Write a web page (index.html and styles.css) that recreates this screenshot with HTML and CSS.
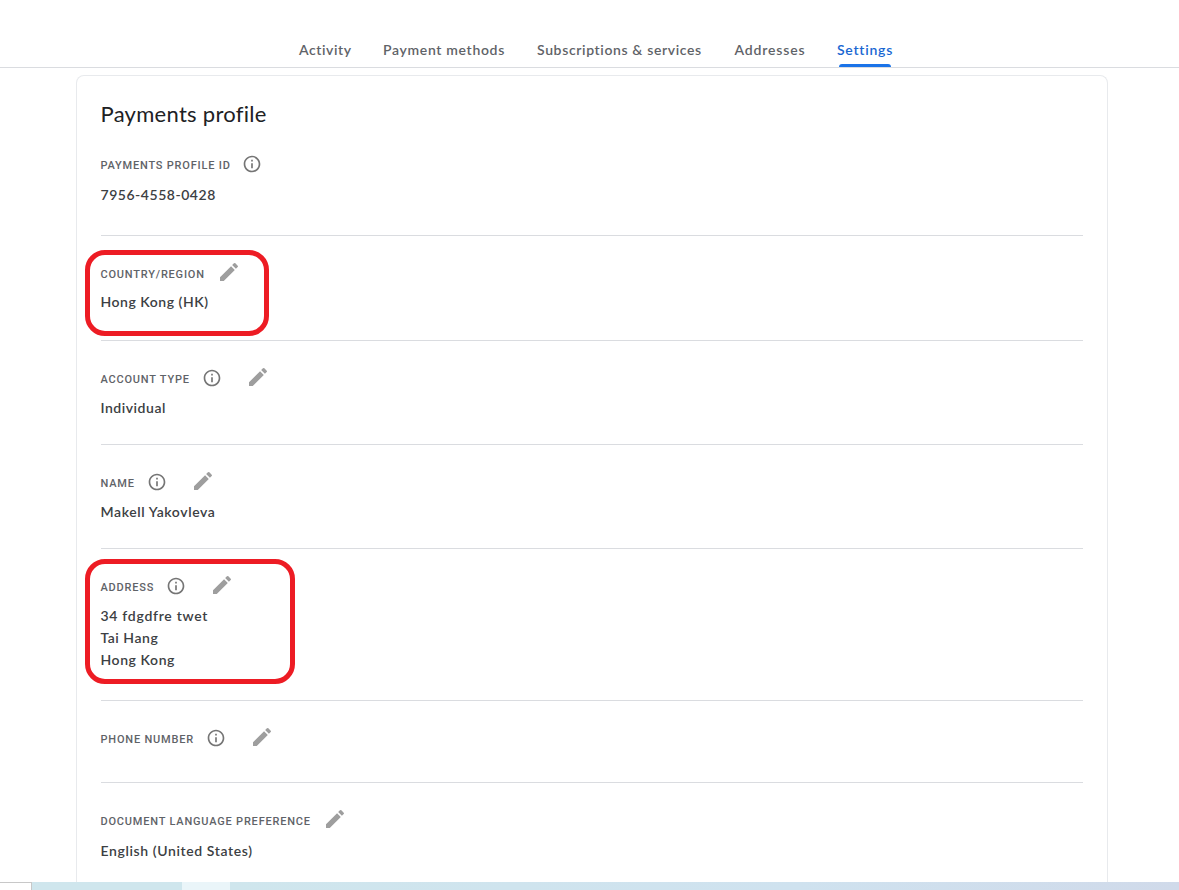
FILE: index.html
```html
<!DOCTYPE html>
<html lang="en">
<head>
<meta charset="utf-8">
<title>Settings</title>
<link rel="stylesheet" href="styles.css">
</head>
<body>
<svg class="defs" aria-hidden="true">
  <symbol id="info" viewBox="0 0 24 24"><path d="M11 7h2v2h-2zm0 4h2v6h-2zm1-9C6.48 2 2 6.48 2 12s4.48 10 10 10 10-4.48 10-10S17.52 2 12 2zm0 18c-4.41 0-8-3.59-8-8s3.59-8 8-8 8 3.59 8 8-3.59 8-8 8z"/></symbol>
  <symbol id="edit" viewBox="0 0 24 24"><path d="M3 17.25V21h3.75L17.81 9.94l-3.75-3.75L3 17.25zM20.71 7.04a1 1 0 0 0 0-1.41l-2.34-2.34a1 1 0 0 0-1.41 0l-1.83 1.83 3.75 3.75 1.83-1.83z"/></symbol>
</svg>
<div class="page">
  <nav class="tabs">
    <a class="tab t-activity">Activity</a>
    <a class="tab t-methods">Payment methods</a>
    <a class="tab t-subs">Subscriptions &amp; services</a>
    <a class="tab t-addr">Addresses</a>
    <a class="tab t-settings active">Settings</a>
  </nav>
  <main class="card">
    <h1 class="title"><span>Payments profile</span></h1>
    <section class="row first">
      <div class="head"><span class="label">PAYMENTS PROFILE ID</span><svg class="info"><use href="#info"/></svg></div>
      <div class="value v-id">7956-4558-0428</div>
    </section>
    <section class="row country">
      <div class="head"><span class="label">COUNTRY/REGION</span><svg class="edit"><use href="#edit"/></svg></div>
      <div class="value v-hk">Hong Kong (HK)</div>
      <div class="mark mark-country"></div>
    </section>
    <section class="row">
      <div class="head"><span class="label">ACCOUNT TYPE</span><svg class="info"><use href="#info"/></svg><svg class="edit"><use href="#edit"/></svg></div>
      <div class="value v-ind">Individual</div>
    </section>
    <section class="row">
      <div class="head"><span class="label">NAME</span><svg class="info"><use href="#info"/></svg><svg class="edit"><use href="#edit"/></svg></div>
      <div class="value v-name">Makell Yakovleva</div>
    </section>
    <section class="row address">
      <div class="head"><span class="label">ADDRESS</span><svg class="info"><use href="#info"/></svg><svg class="edit"><use href="#edit"/></svg></div>
      <div class="value v-street">34 fdgdfre twet</div>
      <div class="value v-tai">Tai Hang</div>
      <div class="value v-city">Hong Kong</div>
      <div class="mark mark-address"></div>
    </section>
    <section class="row phone">
      <div class="head"><span class="label">PHONE NUMBER</span><svg class="info"><use href="#info"/></svg><svg class="edit"><use href="#edit"/></svg></div>
    </section>
    <section class="row language">
      <div class="head"><span class="label">DOCUMENT LANGUAGE PREFERENCE</span><svg class="edit"><use href="#edit"/></svg></div>
      <div class="value v-lang">English (United States)</div>
    </section>
  </main>
  <footer class="strip"><div class="corner"></div><div class="band"></div><div class="band light"></div><div class="band fade"></div></footer>
</div>
</body>
</html>
```
FILE: styles.css
```css
* { box-sizing: border-box; }
body { margin: 0; background: #fff; font-family: "Lato", "Open Sans", sans-serif; }
.defs { display: none; }
.page { width: 1179px; height: 890px; overflow: hidden; display: flex; flex-direction: column; }
.tabs { flex: none; height: 68px; border-bottom: 1px solid #dadce0; padding: 32px 0 0 299px; display: flex; gap: 32px; }
.tab { height: 35px; line-height: 36px; font-size: 14px; font-weight: 600; color: #5f6368; white-space: nowrap; }
.t-activity { width: 52px; letter-spacing: .6px; }
.t-methods { width: 122px; letter-spacing: .67px; }
.t-subs { width: 165.5px; letter-spacing: .63px; }
.t-addr { width: 70.5px; letter-spacing: .85px; }
.t-settings { width: 56px; letter-spacing: .75px; }
.active { color: #1967d2; display: flex; flex-direction: column; }
.active::after { content: ""; flex: none; height: 3px; margin: -4px 2px 0; background: #1a73e8; border-radius: 3px 3px 0 0; }
.card { flex: none; width: 1032px; height: 807px; margin: 7px 0 0 76px; padding: 0 24px 0 23.5px; border: 1px solid #e8eaed; border-bottom: 0; border-radius: 8px 8px 0 0; overflow: hidden; }
.title { margin: 0; height: 66px; padding-top: 21px; line-height: 34px; font-size: 22px; font-weight: 400; color: #202124; white-space: nowrap; letter-spacing: .28px; }
.row { position: relative; height: 104px; border-top: 1px solid #dadce0; padding-top: 24px; }
.row.first { height: 93px; border: 0; padding-top: 9px; }
.head { height: 28px; display: flex; align-items: center; }
.label { font: 500 11px/16px "Roboto", sans-serif; letter-spacing: .8px; color: #5f6368; white-space: nowrap; padding-top: 1px; }
.info { width: 20px; height: 20px; margin: -2px 0 0 12px; fill: #757575; }
.first .info { margin-left: 11px; }
.edit { width: 24px; height: 24px; margin: -4px 0 0 12px; fill: #9e9e9e; }
.info + .edit { margin-left: 24px; }
.value { margin-top: 4px; height: 22px; line-height: 22px; font-size: 14px; font-weight: 600; color: #3c4043; white-space: nowrap; letter-spacing: .53px; }
.value + .value { margin-top: 0; }
.first .value { margin-top: 5px; }
.country { height: 105px; }
.country .value { margin-top: 3px; }
.address { height: 152px; }
.phone { height: 82px; }
.language .value { margin-top: 5px; }
.v-name { letter-spacing: .6px; }
.v-street { letter-spacing: .71px; }
.v-city { letter-spacing: .58px; }
.v-lang { letter-spacing: .61px; }
.mark { position: absolute; border: 5px solid #ed1c24; border-radius: 20px; }
.mark-country { left: -16px; top: 14px; width: 184px; height: 86px; }
.mark-address { left: -16px; top: 10px; width: 210px; height: 125px; }
.strip { flex: none; height: 8px; display: flex; }
.corner { width: 32px; border-top: 1px solid #c8c8c8; border-right: 1px solid #c8c8c8; }
.band { width: 150px; background: #cfe6ed; }
.light { width: 48px; background: #eaf5f9; }
.fade { flex: 1; background: linear-gradient(90deg, #cfe6ed, #cfe2ef 60%, #d0daea); }
```
